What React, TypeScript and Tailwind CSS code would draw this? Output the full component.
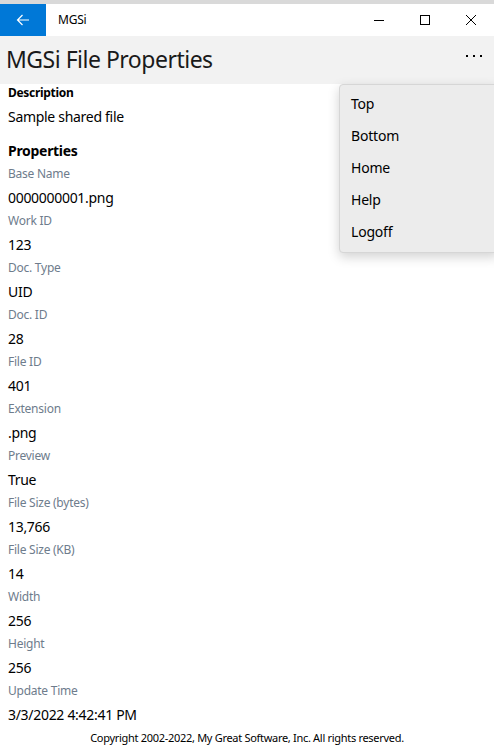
import React from "react";

const rows: [string, string][] = [
  ["Base Name", "0000000001.png"],
  ["Work ID", "123"],
  ["Doc. Type", "UID"],
  ["Doc. ID", "28"],
  ["File ID", "401"],
  ["Extension", ".png"],
  ["Preview", "True"],
  ["File Size (bytes)", "13,766"],
  ["File Size (KB)", "14"],
  ["Width", "256"],
  ["Height", "256"],
  ["Update Time", "3/3/2022 4:42:41 PM"],
];

export default function App() {
  return (
    <div
      className="relative w-[494px] h-[747px] overflow-hidden bg-white text-black"
      style={{ fontFamily: '"Noto Sans", "Open Sans", sans-serif' }}
    >
      <div className="h-[4px] bg-[#d9d9d9]" />
      <div className="flex h-[32px] items-center bg-white">
        <div className="flex h-full w-[46px] items-center justify-center bg-[#0078d7]">
          <svg width="14" height="12" viewBox="0 0 14 12" fill="none" stroke="white" strokeWidth="1.2">
            <path d="M13 6H1.5M6.5 1L1.5 6l5 5" />
          </svg>
        </div>
        <div className="ml-[12px] text-[12px] leading-none tracking-[-0.2px]">MGSi</div>
        <div className="ml-auto flex h-full">
          <div className="flex w-[46px] items-center justify-center">
            <svg width="10" height="10" viewBox="0 0 10 10" stroke="black" strokeWidth="1">
              <path d="M0 5.5h10" />
            </svg>
          </div>
          <div className="flex w-[46px] items-center justify-center">
            <svg width="10" height="10" viewBox="0 0 10 10" fill="none" stroke="black" strokeWidth="1">
              <rect x="0.5" y="0.5" width="9" height="9" />
            </svg>
          </div>
          <div className="flex w-[46px] items-center justify-center">
            <svg width="10" height="10" viewBox="0 0 10 10" stroke="black" strokeWidth="1">
              <path d="M0 0L10 10M10 0L0 10" />
            </svg>
          </div>
        </div>
      </div>
      <div className="flex h-[48px] items-center justify-between bg-[#f2f2f2] pl-[6px] pr-[12px]">
        <div className="text-[23px] leading-none tracking-[-0.5px] text-[#1a1a1a] pb-[2px]">MGSi File Properties</div>
        <div className="flex gap-[5px] pb-[8px]">
          <span className="block h-[2px] w-[2px] bg-black" />
          <span className="block h-[2px] w-[2px] bg-black" />
          <span className="block h-[2px] w-[2px] bg-black" />
        </div>
      </div>
      <div className="px-[8px]">
        <div className="mt-[1px] text-[12px] font-bold leading-[16px] tracking-[-0.3px]">Description</div>
        <div className="mt-[8px] text-[14px] leading-[16px] tracking-[-0.3px]">Sample shared file</div>
        <div className="mt-[18px] text-[14px] font-bold leading-[16px] tracking-[-0.3px]">Properties</div>
        {rows.map(([k, v]) => (
          <div key={k}>
            <div className="mt-[7px] text-[12px] leading-[16px] tracking-[-0.25px] text-[#6e7c8c]">{k}</div>
            <div className="mt-[8px] text-[14px] leading-[16px] tracking-[-0.3px]">{v}</div>
          </div>
        ))}
      </div>
      <div className="mt-[8px] text-center text-[11px] leading-[14px] tracking-[-0.3px]">
        Copyright 2002-2022, My Great Software, Inc. All rights reserved.
      </div>
      <div className="absolute left-[339px] top-[84px] w-[160px] rounded-[4px] border border-[#d6d6d6] bg-[#ececec] pt-[2px] pb-[5px] shadow-[0_4px_12px_rgba(0,0,0,0.18)]">
        {["Top", "Bottom", "Home", "Help", "Logoff"].map((t) => (
          <div key={t} className="flex h-[32px] items-center pl-[11px] text-[14px] tracking-[-0.2px]">
            {t}
          </div>
        ))}
      </div>
    </div>
  );
}
